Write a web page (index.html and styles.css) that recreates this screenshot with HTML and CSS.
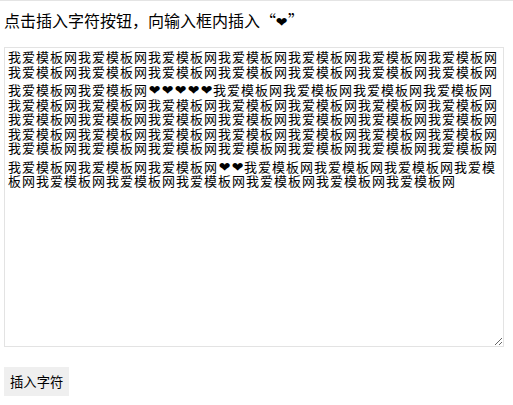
FILE: index.html
```html
<!DOCTYPE html>
<html lang="zh-CN">
<head>
<meta charset="utf-8">
<title>插入字符</title>
<link rel="stylesheet" href="styles.css">
</head>
<body>
<p class="intro">点击插入字符按钮，向输入框内插入<span class="q-open">“</span><span class="intro-heart">❤</span><span class="q-close">”</span></p>
<div class="editor" contenteditable="true" role="textbox" aria-multiline="true">我爱模板网我爱模板网我爱模板网我爱模板网我爱模板网我爱模板网我爱模板网我爱模板网我爱模板网我爱模板网我爱模板网我爱模板网我爱模板网我爱模板网我爱模板网我爱模板网<span class="heart">❤</span><span class="heart">❤</span><span class="heart">❤</span><span class="heart">❤</span><span class="heart">❤</span>我爱模板网我爱模板网我爱模板网我爱模板网我爱模板网我爱模板网我爱模板网我爱模板网我爱模板网我爱模板网我爱模板网我爱模板网我爱模板网我爱模板网我爱模板网我爱模板网我爱模板网我爱模板网我爱模板网我爱模板网我爱模板网我爱模板网我爱模板网我爱模板网我爱模板网我爱模板网我爱模板网我爱模板网我爱模板网我爱模板网我爱模板网我爱模板网我爱模板网我爱模板网我爱模板网<span class="heart">❤</span><span class="heart">❤</span>我爱模板网我爱模板网我爱模板网我爱模板网我爱模板网我爱模板网我爱模板网我爱模板网我爱模板网我爱模板网</div>
<button class="insert-btn" type="button">插入字符</button>
</body>
</html>
```

FILE: styles.css
```css
html {
  border-top: 1px solid #e4e4e4;
  background: #ffffff;
}

body {
  margin: 0 4px;
  font-family: "Noto Sans CJK SC", "Noto Sans", sans-serif;
  color: #000000;
  display: flex;
  flex-direction: column;
  align-items: flex-start;
}

.intro {
  margin: 8px 0 0;
  font-size: 16px;
  line-height: 22px;
}

.q-open {
  display: inline-block;
  width: 15px;
  text-align: right;
}

.q-close {
  display: inline-block;
  width: 8px;
  text-align: left;
}

.intro-heart {
  display: inline-block;
  width: 13px;
  text-align: center;
  font-family: "DejaVu Sans", sans-serif;
  font-size: 14px;
  line-height: 10px;
}

.editor {
  margin-top: 16px;
  box-sizing: border-box;
  width: 500px;
  height: 300px;
  border: 1px solid #e3e3e3;
  padding: 2px 3px;
  font-size: 13px;
  letter-spacing: 1px;
  line-height: 14.5px;
  overflow: auto;
  resize: both;
  outline: none;
}

.heart {
  display: inline-block;
  width: 13px;
  padding-top: 4px;
  text-align: center;
  letter-spacing: 0;
  font-family: "DejaVu Sans", sans-serif;
  font-size: 14px;
  line-height: 14.5px;
}

.insert-btn {
  margin-top: 20px;
  border: none;
  background: #efefef;
  padding: 6px;
  font-family: "Noto Sans CJK SC", sans-serif;
  font-size: 13.33px;
  line-height: 17px;
  color: #000000;
}
```
